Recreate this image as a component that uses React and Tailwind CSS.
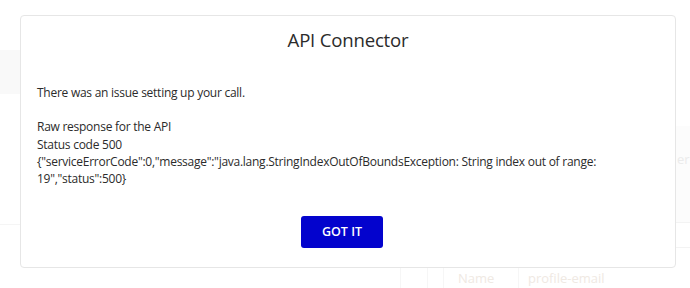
import React from 'react';

const font = { fontFamily: '"Open Sans", Lato, sans-serif' };

const Backdrop = () => (
    <div className="absolute inset-0 pointer-events-none">
        <div className="absolute left-0 top-[50px] w-[20px] h-[44px] bg-[#f9f9f9]" />
        <div className="absolute left-0 top-[224px] w-[20px] h-px bg-[#f5f5f5]" />
        <div className="absolute right-0 top-[126px] w-[14px] h-[96px] bg-[#fcfcfc]" />
        <div className="absolute left-[677px] top-[150px] text-[13px] text-[#ebebeb] whitespace-nowrap">er A</div>
        <div className="absolute right-0 top-[222px] w-[14px] h-px bg-[#f3f3f3]" />
        <div className="absolute right-0 top-[247px] w-[14px] h-px bg-[#f3f3f3]" />
        <div className="absolute left-[400px] top-[268px] flex h-[20px] text-[13px] text-[#efe9e3]">
            <div className="w-[27px] border-l border-[#f6f6f6]" />
            <div className="w-[16px] border-l border-[#f6f6f6]" />
            <div className="w-[75px] border-l border-[#f6f6f6] pl-[14px] pt-[1px]">Name</div>
            <div className="border-l border-[#f6f6f6] pl-[9px] pt-[1px]">profile-email</div>
        </div>
    </div>
);

const App = () => {
    return (
        <div className="relative w-[690px] h-[288px] bg-white overflow-hidden" style={font}>
            <Backdrop />
            <div className="relative ml-[20px] mt-[15px] w-[656px] h-[253px] bg-white border border-[#e6e6e6] rounded-[4px] flex flex-col text-[#2b2b2b]">
                <h2 className="text-center text-[18.6px] leading-[28px] mt-[10px] tracking-[-0.2px]">API Connector</h2>
                <div className="px-[16px] mt-[30px] text-[12px] leading-[17.2px] tracking-[-0.26px]">
                    <p>There was an issue setting up your call.</p>
                    <p className="mt-[17.2px]">Raw response for the API</p>
                    <p>Status code 500</p>
                    <p>{'{"serviceErrorCode":0,"message":"java.lang.StringIndexOutOfBoundsException: String index out of range: 19","status":500}'}</p>
                </div>
                <div className="flex justify-center mt-[29px] pr-[12px]">
                    <button className="w-[82px] h-[32px] rounded-[3px] bg-[#0303cd] text-white text-[12.5px] font-semibold">
                        GOT IT
                    </button>
                </div>
            </div>
        </div>
    );
};

export default App;
